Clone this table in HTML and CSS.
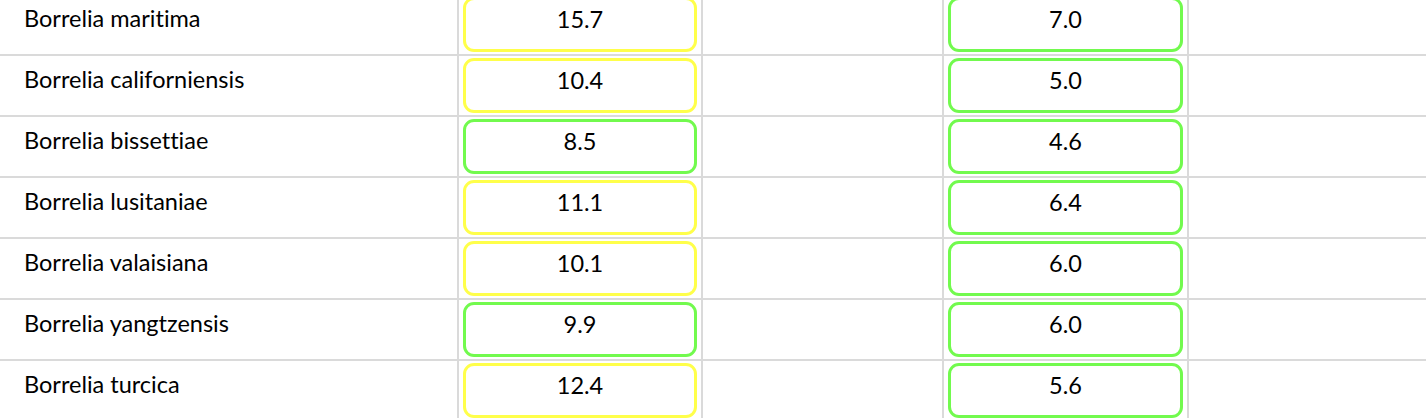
FILE: index.html
```html
<!DOCTYPE html>
<html lang="en">
<head>
<meta charset="utf-8">
<title>Borrelia table</title>
<link rel="stylesheet" href="styles.css">
</head>
<body>
<div class="table">
  <div class="row">
    <div class="cell name">Borrelia maritima</div>
    <div class="cell val"><div class="box warn">15.7</div></div>
    <div class="cell empty"></div>
    <div class="cell val"><div class="box ok">7.0</div></div>
    <div class="cell empty"></div>
  </div>
  <div class="row">
    <div class="cell name">Borrelia californiensis</div>
    <div class="cell val"><div class="box warn">10.4</div></div>
    <div class="cell empty"></div>
    <div class="cell val"><div class="box ok">5.0</div></div>
    <div class="cell empty"></div>
  </div>
  <div class="row">
    <div class="cell name">Borrelia bissettiae</div>
    <div class="cell val"><div class="box ok">8.5</div></div>
    <div class="cell empty"></div>
    <div class="cell val"><div class="box ok">4.6</div></div>
    <div class="cell empty"></div>
  </div>
  <div class="row">
    <div class="cell name">Borrelia lusitaniae</div>
    <div class="cell val"><div class="box warn">11.1</div></div>
    <div class="cell empty"></div>
    <div class="cell val"><div class="box ok">6.4</div></div>
    <div class="cell empty"></div>
  </div>
  <div class="row">
    <div class="cell name">Borrelia valaisiana</div>
    <div class="cell val"><div class="box warn">10.1</div></div>
    <div class="cell empty"></div>
    <div class="cell val"><div class="box ok">6.0</div></div>
    <div class="cell empty"></div>
  </div>
  <div class="row">
    <div class="cell name">Borrelia yangtzensis</div>
    <div class="cell val"><div class="box ok">9.9</div></div>
    <div class="cell empty"></div>
    <div class="cell val"><div class="box ok">6.0</div></div>
    <div class="cell empty"></div>
  </div>
  <div class="row">
    <div class="cell name">Borrelia turcica</div>
    <div class="cell val"><div class="box warn">12.4</div></div>
    <div class="cell empty"></div>
    <div class="cell val"><div class="box ok">5.6</div></div>
    <div class="cell empty"></div>
  </div>
</div>
</body>
</html>
```
FILE: styles.css
```css
html, body {
  margin: 0;
  padding: 0;
  overflow: hidden;
  background: #fff;
}

body {
  font-family: Lato, "Liberation Sans", sans-serif;
  font-size: 23.5px;
  line-height: 28px;
  color: #000;
  font-variant-ligatures: none;
}

.table {
  margin-top: -5px;
}

.row {
  display: grid;
  grid-template-columns: 457px 244px 241px 245px 1fr;
}

.cell {
  height: 59px;
  border-bottom: 2px solid #dadada;
}

.name {
  padding: 9px 0 0 24px;
  height: 50px;
}

.val,
.empty {
  border-left: 2px solid #dadada;
}

.val {
  padding: 2px 4px;
  height: 55px;
}

.box {
  height: 55px;
  box-sizing: border-box;
  border: 3px solid;
  border-radius: 11px;
  padding-top: 5px;
  text-align: center;
}

.warn {
  border-color: #ffff4a;
}

.ok {
  border-color: #72fa4e;
}
```
